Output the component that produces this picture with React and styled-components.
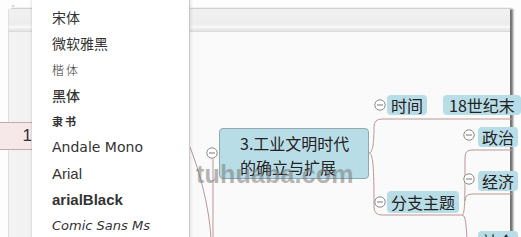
import React from "react";
import styled, { createGlobalStyle } from "styled-components";

const GlobalStyle = createGlobalStyle`
  html, body { margin: 0; padding: 0; background: #fff; }
  body { font-family: "Noto Sans CJK SC", "Liberation Sans", sans-serif; }
`;

// canvas origin on the page
const CX = 32;
const CY = 31;

const fonts = [
  { label: "宋体", family: '"Noto Sans CJK SC", serif', size: 14, weight: 400 },
  { label: "微软雅黑", family: '"Noto Sans CJK SC", sans-serif', size: 14, weight: 400 },
  { label: "楷体", family: '"Noto Sans CJK SC", sans-serif', size: 12, weight: 300, spacing: 2 },
  { label: "黑体", family: '"Noto Sans CJK SC", sans-serif', size: 14, weight: 500 },
  { label: "隶书", family: '"Noto Sans CJK SC", sans-serif', size: 11, weight: 700, spacing: 2 },
  { label: "Andale Mono", family: '"DejaVu Sans", sans-serif', size: 14, weight: 400 },
  { label: "Arial", family: '"Liberation Sans", sans-serif', size: 15, weight: 400 },
  { label: "arialBlack", family: '"Liberation Sans", sans-serif', size: 15, weight: 700 },
  { label: "Comic Sans Ms", family: '"DejaVu Sans", sans-serif', size: 13, weight: 400, italic: true },
];

const Page = styled.div`
  position: relative;
  width: 521px;
  height: 237px;
  overflow: hidden;
  background: #fdfdfd;
  padding-top: 9px;
  box-sizing: border-box;
`;

const Window = styled.div`
  margin-left: 8px;
  width: 502px;
  height: 228px;
  display: flex;
  flex-direction: column;
  box-shadow: 3px 0 2px rgba(0, 0, 0, 0.55);
  background: #fafafa;
`;

const Header = styled.div`
  height: 22px;
  flex: none;
  background: linear-gradient(#f1f1f1 0, #ededed 16px, #f7f7f7 17px, #f7f7f7 19px, #e8e8e8 20px);
  border-bottom: 1px solid #d9d9d9;
  border-left: 1px solid #e0e0e0;
  position: relative;
`;

const Chevron = styled.span`
  position: absolute;
  left: 2px;
  top: -4px;
  font-size: 8px;
  color: #aaa;
  font-family: "DejaVu Sans", sans-serif;
`;

const Body = styled.div`
  flex: 1;
  display: flex;
  min-height: 0;
`;

const Side = styled.div`
  width: 24px;
  flex: none;
  background: #f2f2f2;
  border-left: 1px solid #dedede;
  box-sizing: border-box;
  padding-top: 90px;
`;

const PinkRow = styled.div`
  margin-left: -9px;
  height: 26px;
  background: #f6e8e8;
  border-top: 1px solid #c9a8a8;
  border-bottom: 1px solid #c9a8a8;
  font-family: "Liberation Sans", sans-serif;
  font-size: 17px;
  color: #333;
  display: flex;
  align-items: center;
  justify-content: flex-end;
`;

const Canvas = styled.div`
  flex: 1;
  position: relative;
  background: #fafafa;
`;

const Wires = styled.svg`
  position: absolute;
  left: ${-CX}px;
  top: ${-CY}px;
  width: 521px;
  height: 237px;
  overflow: visible;
`;

const MainNode = styled.div`
  position: absolute;
  left: ${219 - CX}px;
  top: ${127 - CY}px;
  width: 150px;
  height: 51px;
  box-sizing: border-box;
  background: #b9dde7;
  border: 1px solid #8fa9b0;
  border-radius: 4px;
  padding: 2px 0 0 20px;
  font-size: 16px;
  line-height: 24px;
  color: #222;
`;

const Label = styled.div`
  position: absolute;
  left: ${(p) => p.$x - CX}px;
  top: ${(p) => p.$y - CY}px;
  height: ${(p) => p.$h || 20}px;
  padding: 0 ${(p) => p.$pad ?? 4}px;
  background: #b9dde7;
  border-radius: 4px;
  font-size: 16px;
  line-height: ${(p) => p.$h || 20}px;
  color: #222;
  white-space: nowrap;
`;

const Toggle = styled.svg`
  position: absolute;
  left: ${(p) => p.$x - CX - 6}px;
  top: ${(p) => p.$y - CY - 6}px;
  width: 12px;
  height: 12px;
`;

const Menu = styled.div`
  position: absolute;
  left: 32px;
  top: -4px;
  width: 158px;
  height: 250px;
  background: #fff;
  border-right: 1px solid #c8c8c8;
  box-shadow: -1px 0 2px rgba(0, 0, 0, 0.08), 1px 0 3px rgba(0, 0, 0, 0.1);
  padding-top: 8px;
  box-sizing: border-box;
  display: flex;
  flex-direction: column;
`;

const MenuItem = styled.div`
  height: 26px;
  display: flex;
  align-items: center;
  padding-left: 20px;
  font-family: ${(p) => p.$family};
  font-size: ${(p) => p.$size}px;
  font-weight: ${(p) => p.$weight};
  font-style: ${(p) => (p.$italic ? "italic" : "normal")};
  letter-spacing: ${(p) => p.$spacing || 0}px;
  color: #333;
`;

const Watermark = styled.div`
  position: absolute;
  left: 196px;
  top: 160px;
  font-family: "Liberation Sans", sans-serif;
  font-weight: 700;
  font-size: 25px;
  letter-spacing: 0.2px;
  color: rgba(120, 120, 120, 0.55);
  pointer-events: none;
`;

const Minus = ({ x, y }) => (
  <Toggle $x={x} $y={y} viewBox="0 0 12 12">
    <circle cx="6" cy="6" r="5.2" fill="#fff" stroke="#8a8a8a" strokeWidth="1" />
    <line x1="3" y1="6" x2="9" y2="6" stroke="#777" strokeWidth="1" />
  </Toggle>
);

const wire = "#bb9797";

export default function App() {
  return (
    <Page>
      <GlobalStyle />
      <Window>
        <Header>
          <Chevron>˅</Chevron>
        </Header>
        <Body>
          <Side>
            <PinkRow>1</PinkRow>
          </Side>
          <Canvas>
            <Wires viewBox="0 0 521 237">
              <g fill="none" stroke={wire} strokeWidth="1">
                <path d="M190 146 C200 172 209 205 211 237" />
                <path d="M213 158 L213 237" />
                <path d="M369 152 C373 152 374 140 374 126 Q374 118 382 118 L512 118" />
                <path d="M369 152 C373 152 374 166 374 206 Q374 214 382 214 L462 214" />
                <path d="M462 214 C465 214 465 200 465 156 Q465 149 472 149 L512 149" />
                <path d="M465 200 Q465 193 472 193 L512 193" />
                <path d="M462 214 C466 214 466 226 467 237" />
              </g>
            </Wires>
            <MainNode>
              3.工业文明时代
              <br />
              的确立与扩展
            </MainNode>
            <Minus x={212} y={152} />
            <Minus x={380} y={104} />
            <Label $x={387} $y={94}>时间</Label>
            <Label $x={443} $y={94} $pad={6}>18世纪末</Label>
            <Minus x={380} y={201} />
            <Label $x={387} $y={190} $h={22}>分支主题</Label>
            <Minus x={469} y={134} />
            <Label $x={478} $y={126}>政治</Label>
            <Minus x={469} y={178} />
            <Label $x={478} $y={170}>经济</Label>
            <Label $x={478} $y={230}>社会</Label>
          </Canvas>
        </Body>
      </Window>
      <Menu>
        {fonts.map((f) => (
          <MenuItem
            key={f.label}
            $family={f.family}
            $size={f.size}
            $weight={f.weight}
            $italic={f.italic}
            $spacing={f.spacing}
          >
            {f.label}
          </MenuItem>
        ))}
      </Menu>
      <Watermark>tuhuaba.com</Watermark>
    </Page>
  );
}
